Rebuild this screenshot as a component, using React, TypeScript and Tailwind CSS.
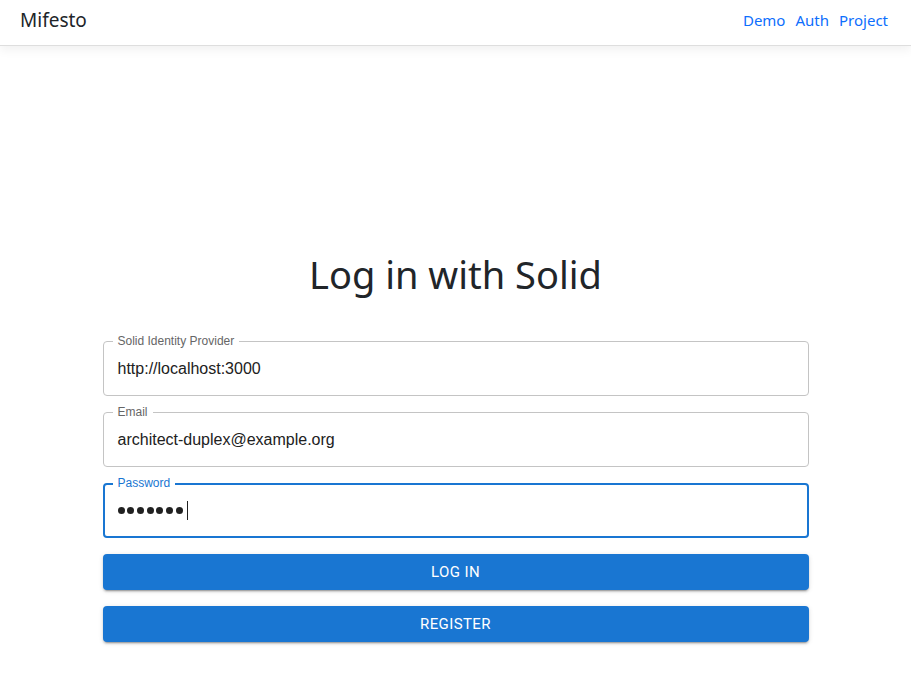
const links = ["Demo", "Auth", "Project"];

type FieldProps = {
  label: string;
  value?: string;
  focused?: boolean;
  password?: boolean;
};

const Field = ({ label, value, focused, password }: FieldProps) => {
  return (
    <div
      className={
        focused
          ? "relative h-[55px] rounded-[4px] border-2 border-[#1976d2] px-[13px] flex items-center"
          : "relative h-[55px] rounded-[4px] border border-[#c4c4c4] px-[14px] flex items-center"
      }
    >
      <span
        className={
          focused
            ? "absolute left-[8px] top-[-10px] bg-white px-[5px] text-[12px] leading-[16px] text-[#1976d2]"
            : "absolute left-[9px] top-[-9px] bg-white px-[5px] text-[12px] leading-[16px] text-[#666666]"
        }
      >
        {label}
      </span>
      {password ? (
        <div className="flex items-center gap-[2.7px]">
          {Array.from({ length: 7 }).map((_, i) => (
            <span key={i} className="inline-block w-[7px] h-[7px] rounded-full bg-[#212121]" />
          ))}
          <span className="ml-[2px] inline-block w-[1px] h-[19px] bg-[#212121]" />
        </div>
      ) : (
        <span className="text-[16px] text-[#212121]">{value}</span>
      )}
    </div>
  );
};

export default function App() {
  return (
    <div className="min-h-screen bg-white font-['Liberation_Sans',Arial,sans-serif]">
      <header className="h-[46px] bg-white border-b border-[#dedede] shadow-[0_4px_10px_rgba(0,0,0,0.06)] flex items-center justify-between pl-[20px] pr-[23px] pb-[4px]">
        <span className="font-['Noto_Sans',sans-serif] text-[19px] text-[#212529]">Mifesto</span>
        <nav className="flex gap-[10px] font-['Noto_Sans',sans-serif] text-[15px] text-[#0d6efd]">
          {links.map((l) => (
            <a key={l} href="#">
              {l}
            </a>
          ))}
        </nav>
      </header>

      <main className="mx-auto w-[706px] pt-[204px]">
        <h1 className="text-center font-['Noto_Sans',sans-serif] text-[38px] leading-[48px] text-[#212529] mb-[43px]">
          Log in with Solid
        </h1>
        <div className="flex flex-col gap-[16px] font-['Liberation_Sans',Arial,sans-serif]">
          <Field label="Solid Identity Provider" value="http://localhost:3000" />
          <Field label="Email" value="architect-duplex@example.org" />
          <Field label="Password" focused password />
          <button className="h-[36px] rounded-[4px] bg-[#1976d2] text-white text-[15px] font-['Roboto',sans-serif] tracking-[0.4px] uppercase shadow-[0_3px_1px_-2px_rgba(0,0,0,0.2),0_2px_2px_0_rgba(0,0,0,0.14),0_1px_5px_0_rgba(0,0,0,0.12)]">
            Log in
          </button>
          <button className="h-[36px] rounded-[4px] bg-[#1976d2] text-white text-[15px] font-['Roboto',sans-serif] tracking-[0.4px] uppercase shadow-[0_3px_1px_-2px_rgba(0,0,0,0.2),0_2px_2px_0_rgba(0,0,0,0.14),0_1px_5px_0_rgba(0,0,0,0.12)]">
            Register
          </button>
        </div>
      </main>
    </div>
  );
}
